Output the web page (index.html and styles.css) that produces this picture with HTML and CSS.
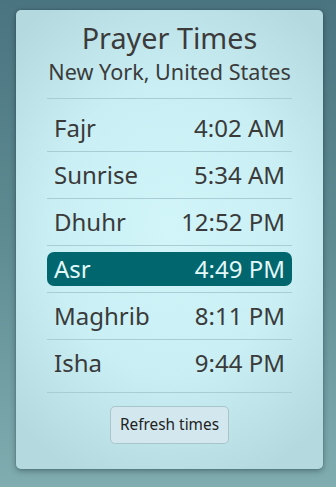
FILE: index.html
```html
<!DOCTYPE html>
<html lang="en">
<head>
<meta charset="utf-8">
<title>Prayer Times</title>
<link rel="stylesheet" href="styles.css">
</head>
<body>
<main class="card">
  <h1 class="title">Prayer Times</h1>
  <p class="location">New York, United States</p>
  <ul class="times">
    <li class="row"><div class="slot"><span>Fajr</span><span>4:02 AM</span></div></li>
    <li class="row"><div class="slot"><span>Sunrise</span><span>5:34 AM</span></div></li>
    <li class="row"><div class="slot"><span>Dhuhr</span><span>12:52 PM</span></div></li>
    <li class="row"><div class="slot current"><span>Asr</span><span>4:49 PM</span></div></li>
    <li class="row"><div class="slot"><span>Maghrib</span><span>8:11 PM</span></div></li>
    <li class="row"><div class="slot"><span>Isha</span><span>9:44 PM</span></div></li>
  </ul>
  <div class="actions">
    <button class="refresh" type="button">Refresh times</button>
  </div>
</main>
</body>
</html>
```

FILE: styles.css
```css
html, body {
  margin: 0;
  padding: 0;
  height: 100%;
}

body {
  font-family: "Noto Sans", "Open Sans", sans-serif;
  color: #3a3a3a;
  background: linear-gradient(180deg, #4a7480 0%, #5f8c93 50%, #80adb0 100%);
  overflow: hidden;
}

.card {
  box-sizing: border-box;
  width: 307px;
  margin: 10px 0 0 16px;
  padding: 8px 31px 25px;
  border-radius: 5px;
  background: radial-gradient(ellipse 72% 58% at 50% 48%, #d1f5f9 0%, #c9eff4 55%, #b4d9df 100%);
  box-shadow: 0 2px 6px rgba(0, 20, 30, 0.35), 0 0 2px rgba(0, 20, 30, 0.25);
}

.title {
  margin: 0;
  font-size: 28.8px;
  font-weight: 400;
  line-height: normal;
  text-align: center;
  color: #3b3b3b;
}

.location {
  margin: 0 0 12px;
  font-size: 21.6px;
  line-height: normal;
  text-align: center;
  color: #3b3b3b;
}

.times {
  list-style: none;
  margin: 0;
  padding: 6px 0;
  border-top: 1px solid #a9cdd3;
  border-bottom: 1px solid #a9cdd3;
}

.row {
  padding: 6px 0;
  border-bottom: 1px solid #a9cdd3;
}

.row:last-child {
  border-bottom: none;
}

.slot {
  display: flex;
  justify-content: space-between;
  padding: 0 7px;
  font-size: 24px;
  line-height: 34px;
  border-radius: 7px;
}

.slot.current {
  background: #01666e;
  color: #e2f8fa;
}

.actions {
  display: flex;
  justify-content: center;
  margin-top: 13px;
}

.refresh {
  font-family: "Noto Sans", "Open Sans", sans-serif;
  font-size: 15.4px;
  line-height: 20px;
  color: #222;
  padding: 8px 9px;
  background: #d2e8ee;
  border: 1px solid #a8c5cb;
  border-radius: 5px;
}
```
